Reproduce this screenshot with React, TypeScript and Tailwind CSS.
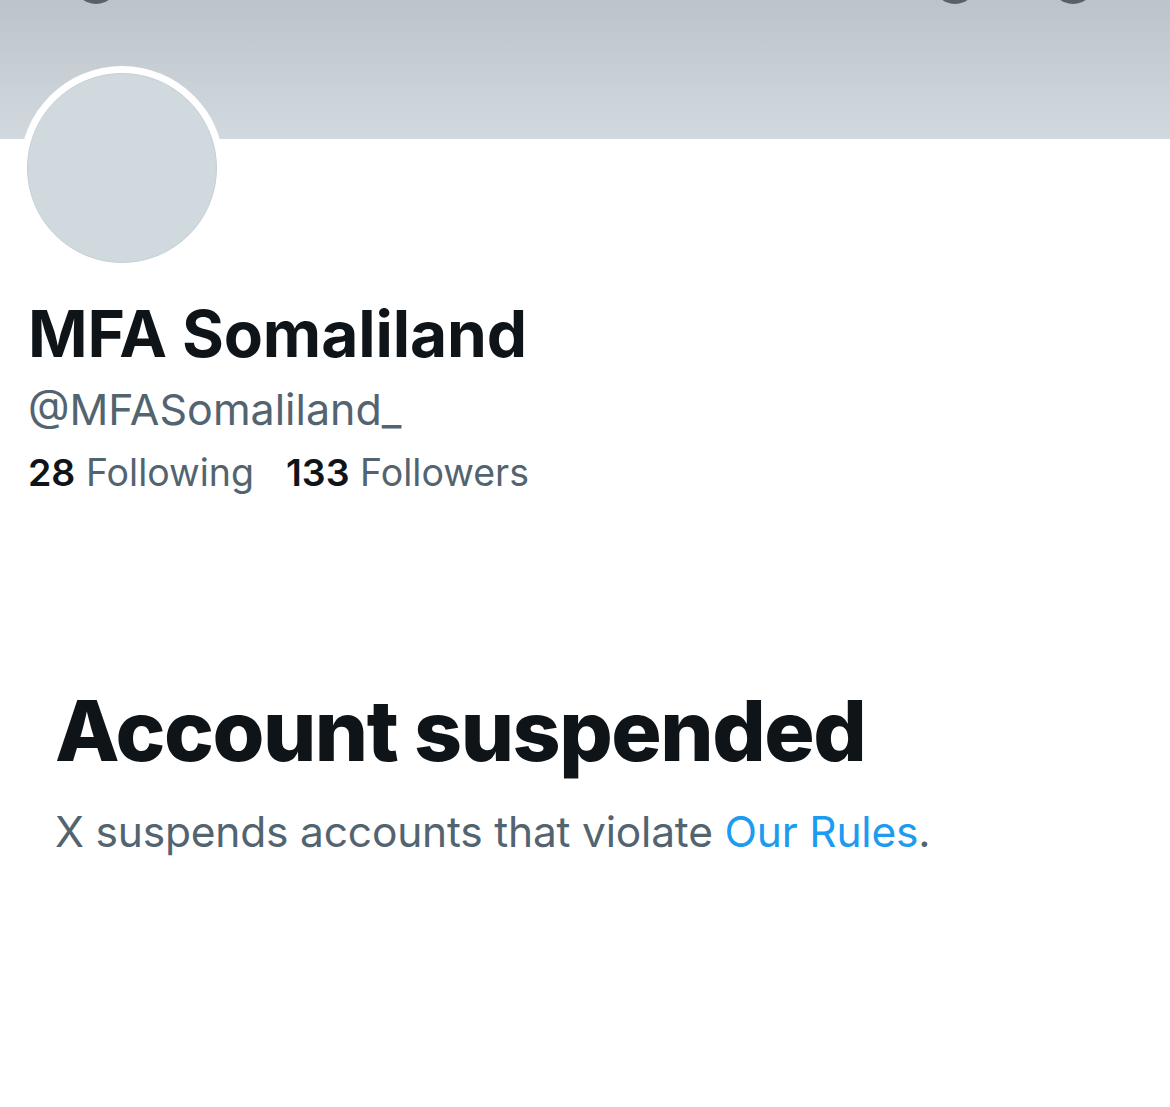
import React from 'react';

const ProfileHeader: React.FC = () => {
  return (
    <div>
      <div className="relative h-[139px] overflow-hidden bg-gradient-to-b from-[#bcc4cb] to-[#d2d9de]">
        <div className="absolute left-[74px] top-[-40px] h-[44px] w-[44px] rounded-full bg-[#5a6166]" />
        <div className="absolute left-[933px] top-[-40px] h-[44px] w-[44px] rounded-full bg-[#5a6166]" />
        <div className="absolute left-[1051px] top-[-40px] h-[44px] w-[44px] rounded-full bg-[#5a6166]" />
      </div>
      <div className="relative z-10 px-[20px] -mt-[73px]">
        <div className="h-[204px] w-[204px] rounded-full bg-white p-[7px]">
          <div className="h-full w-full rounded-full border border-[#c5cfd5] bg-[#cfd9de]" />
        </div>
      </div>
      <div className="px-[28px]">
        <h1 className="mt-[32px] text-[64px] font-bold leading-none tracking-[-0.1px] text-[#0f1419]">MFA Somaliland</h1>
        <p className="mt-[22px] text-[43px] leading-none tracking-[0px] text-[#536471]">@MFASomaliland_</p>
        <div className="mt-[23px] flex gap-[32px] text-[37.5px] leading-none">
          <span>
            <span className="font-semibold text-[#0f1419]">28</span>
            <span className="text-[#536471]"> Following</span>
          </span>
          <span>
            <span className="font-semibold text-[#0f1419]">133</span>
            <span className="text-[#536471]"> Followers</span>
          </span>
        </div>
      </div>
    </div>
  );
};

const SuspendedNotice: React.FC = () => {
  return (
    <div className="px-[55px] pt-[197px]">
      <h2 className="text-[84px] font-extrabold leading-none tracking-[-1.5px] text-[#0f1419]">Account suspended</h2>
      <p className="mt-[38px] text-[42.5px] leading-none tracking-[-0.2px] text-[#536471]">
        X suspends accounts that violate <span className="text-[#1d9bf0]">Our Rules</span>.
      </p>
    </div>
  );
};

export default function App() {
  return (
    <div className="h-[1107px] w-[1170px] overflow-hidden bg-white" style={{ fontFamily: 'Inter, "Noto Sans", sans-serif' }}>
      <ProfileHeader />
      <SuspendedNotice />
    </div>
  );
}
